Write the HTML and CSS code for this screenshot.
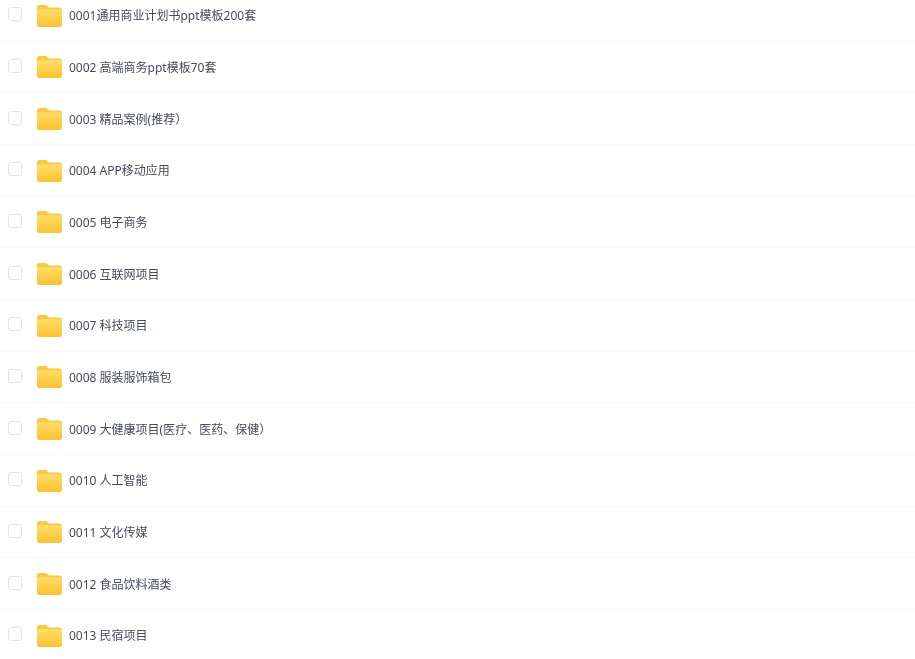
FILE: index.html
```html
<!DOCTYPE html>
<html lang="zh-CN">
<head>
    <meta charset="UTF-8">
    <meta name="viewport" content="width=device-width, initial-scale=1.0">
    <title>文件列表</title>
    <link rel="stylesheet" href="styles.css">
</head>
<body>

<svg class="icon-defs" width="0" height="0" aria-hidden="true">
    <defs>
        <linearGradient id="folder-front" x1="0" y1="0" x2="0" y2="1">
            <stop offset="0" stop-color="#ffde68"/>
            <stop offset="1" stop-color="#fdc12e"/>
        </linearGradient>
        <symbol id="folder" viewBox="0 0 25 22">
            <path d="M0 2.500C0 1.100 1 0 2.400 0h6.200c.8 0 1.400.3 1.900.9L12 2.400h10.400c1.400 0 2.600 1.100 2.600 2.500V8H0z" fill="#fcc840"/>
            <path d="M0 5.800c0-.9.7-1.600 1.600-1.600h21.800c.9 0 1.600.7 1.600 1.600v13.600c0 1.400-1.200 2.600-2.600 2.600H2.600C1.200 22 0 20.800 0 19.400z" fill="url(#folder-front)"/>
        </symbol>
    </defs>
</svg>

<!-- File list -->
<ul class="file-list">
    <li class="file-row"><span class="checkbox"></span><svg class="folder-icon"><use href="#folder"/></svg><span class="file-name">0001通用商业计划书ppt模板200套</span></li>
    <li class="file-row"><span class="checkbox"></span><svg class="folder-icon"><use href="#folder"/></svg><span class="file-name">0002 高端商务ppt模板70套</span></li>
    <li class="file-row"><span class="checkbox"></span><svg class="folder-icon"><use href="#folder"/></svg><span class="file-name">0003 精品案例(推荐）</span></li>
    <li class="file-row"><span class="checkbox"></span><svg class="folder-icon"><use href="#folder"/></svg><span class="file-name">0004 APP移动应用</span></li>
    <li class="file-row"><span class="checkbox"></span><svg class="folder-icon"><use href="#folder"/></svg><span class="file-name">0005 电子商务</span></li>
    <li class="file-row"><span class="checkbox"></span><svg class="folder-icon"><use href="#folder"/></svg><span class="file-name">0006 互联网项目</span></li>
    <li class="file-row"><span class="checkbox"></span><svg class="folder-icon"><use href="#folder"/></svg><span class="file-name">0007 科技项目</span></li>
    <li class="file-row"><span class="checkbox"></span><svg class="folder-icon"><use href="#folder"/></svg><span class="file-name">0008 服装服饰箱包</span></li>
    <li class="file-row"><span class="checkbox"></span><svg class="folder-icon"><use href="#folder"/></svg><span class="file-name">0009 大健康项目(医疗、医药、保健）</span></li>
    <li class="file-row"><span class="checkbox"></span><svg class="folder-icon"><use href="#folder"/></svg><span class="file-name">0010 人工智能</span></li>
    <li class="file-row"><span class="checkbox"></span><svg class="folder-icon"><use href="#folder"/></svg><span class="file-name">0011 文化传媒</span></li>
    <li class="file-row"><span class="checkbox"></span><svg class="folder-icon"><use href="#folder"/></svg><span class="file-name">0012 食品饮料酒类</span></li>
    <li class="file-row"><span class="checkbox"></span><svg class="folder-icon"><use href="#folder"/></svg><span class="file-name">0013 民宿项目</span></li>
</ul>

</body>
</html>
```

FILE: styles.css
```css
* {
    margin: 0;
    padding: 0;
    box-sizing: border-box;
}

html, body {
    height: 100%;
    overflow: hidden;
}

body {
    background-color: #fff;
    color: #454a5f;
    font-family: "Noto Sans", "Noto Sans CJK SC", sans-serif;
}

.icon-defs {
    position: absolute;
}

/* The list is scrolled, so the first row is cut at the top */
.file-list {
    list-style: none;
    margin-top: -10px;
    margin-right: -4px;
    filter: blur(0.4px);
}

.file-row {
    display: flex;
    align-items: center;
    height: 51.67px;
    padding-left: 8px;
    border-bottom: 1px solid #f9f9fa;
}

.checkbox {
    width: 14px;
    height: 14px;
    margin-top: -2px;
    border: 1px solid #e2e3e6;
    border-radius: 3px;
    background: #fff;
}

.folder-icon {
    width: 25px;
    height: 22px;
    margin-left: 15px;
    margin-top: 1px;
}

.file-name {
    margin-left: 7px;
    margin-top: 2px;
    font-size: 12px;
    line-height: 18px;
}
```
